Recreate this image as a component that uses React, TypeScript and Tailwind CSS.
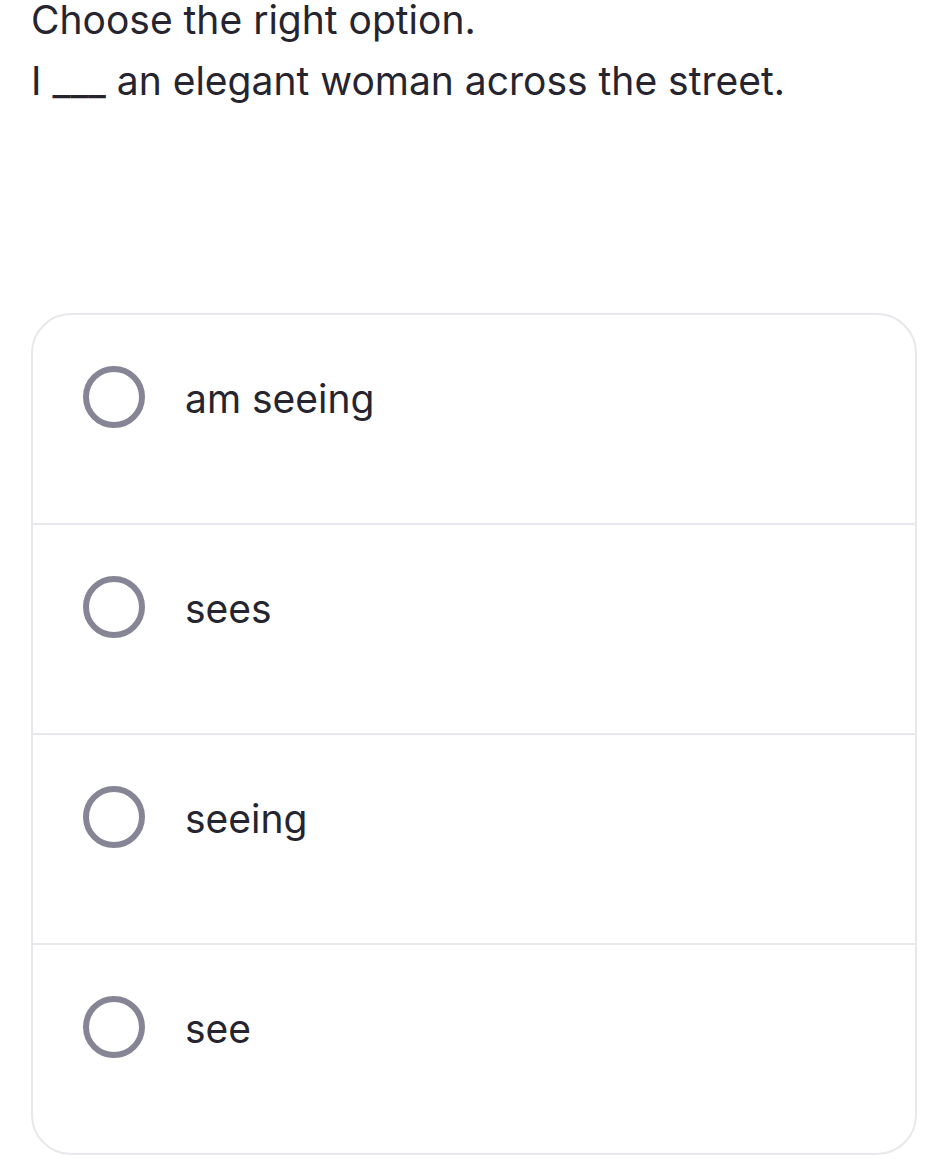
const OPTIONS = ["am seeing", "sees", "seeing", "see"];

export default function App() {
  return (
    <div className="min-h-[1167px] w-[952px] bg-white pl-[31px] pr-[35px] text-[#26252f]" style={{ fontFamily: "Inter, 'Noto Sans', sans-serif" }}>
      <h1 className="text-[39px] leading-[40px] font-normal">Choose the right option.</h1>
      <p className="mt-[10px] text-[39px] leading-[62px] font-normal">I ___ an elegant woman across the street.</p>

      <div className="mt-[201px] overflow-hidden rounded-[40px] border-2 border-[#e8e8ec]">
        {OPTIONS.map((opt, i) => (
          <Option key={opt} label={opt} first={i === 0} />
        ))}
      </div>
    </div>
  );
}

function Option({ label, first }: { label: string; first: boolean }) {
  return (
    <div className={`flex items-start gap-[40px] pl-[50px] pt-[51px] ${first ? "h-[208px]" : "h-[210px] border-t-2 border-[#e8e8ec]"}`}>
      <span className="h-[62px] w-[62px] shrink-0 rounded-full border-[6px] border-[#868596]" />
      <span className="mt-[6px] text-[39px] leading-[54px]">{label}</span>
    </div>
  );
}
